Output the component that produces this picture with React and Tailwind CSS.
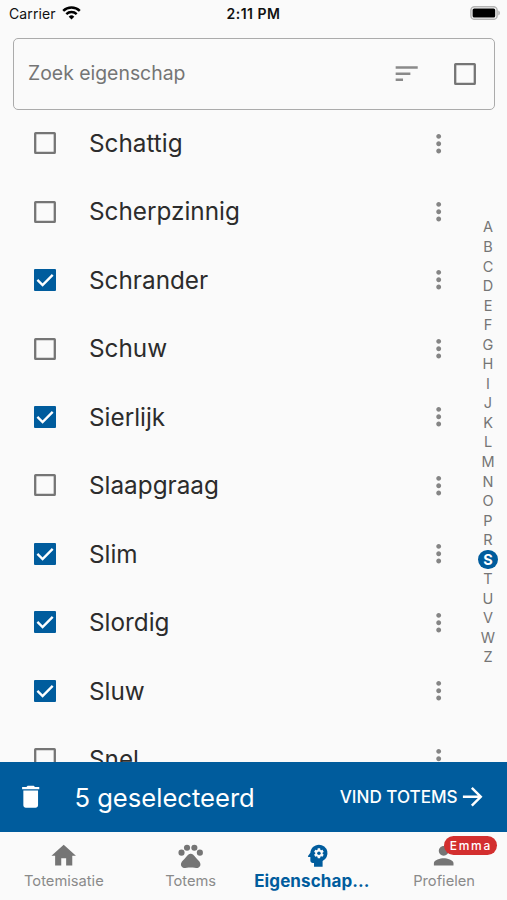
import React, { useState } from 'react';
import {
  MdArrowForward,
  MdDelete,
  MdHome,
  MdMoreVert,
  MdPerson,
  MdPets,
  MdPsychology,
  MdSort,
} from 'react-icons/md';

const traits = [
  'Schattig',
  'Scherpzinnig',
  'Schrander',
  'Schuw',
  'Sierlijk',
  'Slaapgraag',
  'Slim',
  'Slordig',
  'Sluw',
  'Snel',
];

const letters = 'ABCDEFGHIJKLMNOPRSTUVWZ'.split('');

const navItems = [
  { label: 'Totemisatie', icon: MdHome },
  { label: 'Totems', icon: MdPets },
  { label: 'Eigenschap...', icon: MdPsychology, active: true },
  { label: 'Profielen', icon: MdPerson, badge: 'Emma' },
];

function StatusBar() {
  return (
    <div className="grid h-[37.5px] shrink-0 grid-cols-3 pt-[4px] text-[14px] leading-[20px] text-[#111]">
      <div className="flex items-start gap-[6px] pl-[9px]">
        <span className="tracking-[0.1px]">Carrier</span>
        <svg className="mt-[2px] h-[14px] w-[19px]" viewBox="0 0 19 14" fill="none" stroke="#000">
          <path d="M1.2 4.9a11.9 11.9 0 0 1 16.6 0" strokeWidth="2.5" />
          <path d="M4.3 8.1a7.5 7.5 0 0 1 10.4 0" strokeWidth="2.4" />
          <path d="M9.5 13.6 6.7 10.7a4 4 0 0 1 5.6 0z" fill="#000" stroke="none" />
        </svg>
      </div>
      <div className="text-center font-semibold tracking-[0.5px]">2:11 PM</div>
      <div className="flex justify-end pr-[6px]">
        <svg className="mt-[2px] h-[14px] w-[31px]" viewBox="0 0 31 14">
          <rect x="0.9" y="0.7" width="26.2" height="12.6" rx="3.6" fill="#fafafa" stroke="#b4b4b4" strokeWidth="1.5" />
          <rect x="2.6" y="2.4" width="22.6" height="9.2" rx="1.6" fill="#000" />
          <path d="M28.4 4.6a2.7 2.7 0 0 1 0 4.8z" fill="#aaa" />
        </svg>
      </div>
    </div>
  );
}

function Checkbox({ checked, onClick }) {
  return (
    <button onClick={onClick} className="block size-[22px] shrink-0">
      <svg className="size-full" viewBox="0 0 22 22" fill="none">
        {checked ? (
          <>
            <rect width="22" height="22" rx="1" fill="#005c9d" />
            <path d="M3.4 10.9 8.6 16 18.7 5.9" stroke="#fff" strokeWidth="2.4" />
          </>
        ) : (
          <rect x="1.2" y="1.2" width="19.6" height="19.6" rx="0.4" stroke="#757575" strokeWidth="2.3" />
        )}
      </svg>
    </button>
  );
}

function NavItem({ item }) {
  const Icon = item.icon;
  return (
    <div className={`flex flex-col items-center pt-[9px] pl-px ${item.active ? 'text-[#005c9d]' : 'text-[#757575]'}`}>
      <div className="relative">
        <Icon className="size-[29.4px]" />
        {item.badge && (
          <span className="absolute top-[-5px] left-[14.5px] flex h-[19.5px] w-[53px] items-center justify-center rounded-full bg-[#d32f2f] pt-[2px] pl-[1px] text-[12px] font-medium tracking-[1.8px] text-white">
            {item.badge}
          </span>
        )}
      </div>
      <span
        className={
          item.active
            ? 'mt-[1px] mr-[11px] text-[17px] leading-[20px] font-bold tracking-[0.1px] whitespace-nowrap'
            : 'mt-[1.6px] text-[14.7px] leading-[20px] text-[#8a8a8a]'
        }
      >
        {item.label}
      </span>
    </div>
  );
}

export default function App() {
  const [selected, setSelected] = useState(['Schrander', 'Sierlijk', 'Slim', 'Slordig', 'Sluw']);

  const toggle = (trait) =>
    setSelected((prev) => (prev.includes(trait) ? prev.filter((t) => t !== trait) : [...prev, trait]));

  return (
    <div className="flex h-[900px] w-[507px] flex-col overflow-hidden bg-[#fafafa] font-['Inter',sans-serif]">
      <StatusBar />

      {/* Search field */}
      <div className="mr-[12px] ml-[13px] flex h-[72px] shrink-0 items-center rounded-[5px] border-[1.4px] border-[#ababab] pr-[18px] pl-[14px]">
        <span className="flex-1 text-[19.4px] text-[#757575]">Zoek eigenschap</span>
        <MdSort className="mr-[33px] size-[29.4px] text-[#8a8a8a]" />
        <Checkbox checked={false} />
      </div>

      {/* Trait list with the alphabet index next to it */}
      <div className="flex min-h-0 flex-1">
        <div className="-mt-[0.5px] flex-1 overflow-hidden">
          {traits.map((trait) => (
            <div key={trait} className="flex h-[68.44px] items-center pr-[16px] pl-[34px]">
              <Checkbox checked={selected.includes(trait)} onClick={() => toggle(trait)} />
              <span className="ml-[33px] flex-1 text-[24.3px] text-[#2c2c2c]">{trait}</span>
              <MdMoreVert className="size-[29.4px] text-[#858585]" />
            </div>
          ))}
        </div>
        <div className="flex w-[38px] flex-col items-center pt-[108px]">
          {letters.map((letter) => (
            <span
              key={letter}
              className={`flex h-[19.55px] w-[20px] shrink-0 items-center justify-center text-[14.5px] ${
                letter === 'S' ? 'rounded-full bg-[#005c9d] font-bold text-white' : 'text-[#757575]'
              }`}
            >
              {letter}
            </span>
          ))}
        </div>
      </div>

      {/* Selection bar */}
      <div className="flex h-[69.5px] shrink-0 items-center bg-[#005c9d] pr-[20px] pl-[16px] text-white">
        <MdDelete className="size-[29.4px]" />
        <span className="ml-[29px] flex-1 pt-[2px] text-[25.6px]">{selected.length} geselecteerd</span>
        <button className="flex items-center text-[17.1px] font-medium">
          VIND TOTEMS
          <MdArrowForward className="size-[29.4px]" />
        </button>
      </div>

      <nav className="grid h-[68.5px] shrink-0 grid-cols-4">
        {navItems.map((item) => (
          <NavItem key={item.label} item={item} />
        ))}
      </nav>
    </div>
  );
}
